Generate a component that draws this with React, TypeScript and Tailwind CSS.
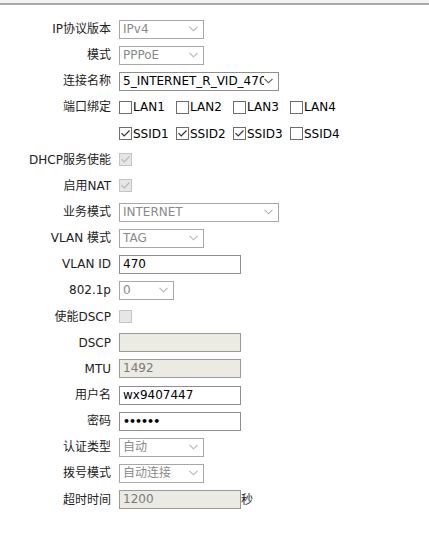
import React from 'react';

const Chevron = ({ dark }: { dark?: boolean }) => (
  <svg width="9" height="6" viewBox="0 0 9 6" className="shrink-0">
    <path d="M0.5 0.8 L4.5 4.8 L8.5 0.8" fill="none" stroke={dark ? '#555' : '#b4b4b4'} strokeWidth="1.1" />
  </svg>
);

const Select = ({ value, width, enabled }: { value: string; width: string; enabled?: boolean }) => (
  <div className={`flex items-center h-[19px] border ${enabled ? 'border-[#8e8e8e] bg-white text-black' : 'border-[#a8a8a8] bg-white text-[#8a8a8a]'} pl-[3px] pr-[5px] ${width}`}>
    <span className="flex-1 overflow-hidden whitespace-nowrap leading-[17px]">{value}</span>
    <Chevron dark={enabled} />
  </div>
);

const Input = ({ value, disabled, children }: { value?: string; disabled?: boolean; children?: React.ReactNode }) => (
  <div className={`flex items-center h-[19px] w-[122px] border ${disabled ? 'border-[#9a9a9a] bg-[#ebebe4] text-[#7a7a7a]' : 'border-[#8e8e8e] bg-white text-black'} px-[3px] leading-[17px]`}>
    {children ?? value}
  </div>
);

const Check = ({ checked, disabled }: { checked?: boolean; disabled?: boolean }) => (
  <span className={`inline-flex items-center justify-center w-[13px] h-[13px] shrink-0 border ${disabled ? 'border-[#c4c4c4] bg-[#e6e6e6]' : 'border-[#6e6e6e] bg-white'}`}>
    {checked && (
      <svg width="11" height="9" viewBox="0 0 11 9">
        <path d="M1.5 4.2 L4.2 7 L9.5 1.5" fill="none" stroke={disabled ? '#b8b8b8' : '#333'} strokeWidth="1.2" />
      </svg>
    )}
  </span>
);

const Box = ({ label, checked }: { label: string; checked?: boolean }) => (
  <span className="flex items-center w-[57px]">
    <Check checked={checked} />
    <span className="ml-[1px] leading-none">{label}</span>
  </span>
);

const Row = ({ label, children }: { label: string; children: React.ReactNode }) => (
  <div className="flex items-center h-[26.15px]">
    <div className="w-[112px] text-right pr-[1px] text-[#222] whitespace-nowrap">{label}</div>
    <div className="ml-[7px] flex items-center">{children}</div>
  </div>
);

export default function App() {
  return (
    <div className="w-[429px] h-[539px] bg-white text-[12px] font-['DejaVu_Sans','Noto_Sans_CJK_SC',sans-serif] overflow-hidden">
      <div className="h-[3px] bg-[#f2f2f2]" />
      <div className="h-[2px] bg-[#a9a9a9]" />
      <div className="pt-[11px]">
        <Row label="IP协议版本"><Select value="IPv4" width="w-[85px]" /></Row>
        <Row label="模式"><Select value="PPPoE" width="w-[85px]" /></Row>
        <Row label="连接名称"><Select value="5_INTERNET_R_VID_470" width="w-[160px]" enabled /></Row>
        <Row label="端口绑定">
          <Box label="LAN1" />
          <Box label="LAN2" />
          <Box label="LAN3" />
          <Box label="LAN4" />
        </Row>
        <Row label="">
          <Box label="SSID1" checked />
          <Box label="SSID2" checked />
          <Box label="SSID3" checked />
          <Box label="SSID4" />
        </Row>
        <Row label="DHCP服务使能"><Check checked disabled /></Row>
        <Row label="启用NAT"><Check checked disabled /></Row>
        <Row label="业务模式"><Select value="INTERNET" width="w-[160px]" /></Row>
        <Row label="VLAN 模式"><Select value="TAG" width="w-[85px]" /></Row>
        <Row label="VLAN ID"><Input value="470" /></Row>
        <Row label="802.1p"><Select value="0" width="w-[55px]" /></Row>
        <Row label="使能DSCP"><Check disabled /></Row>
        <Row label="DSCP"><Input value="" disabled /></Row>
        <Row label="MTU"><Input value="1492" disabled /></Row>
        <Row label="用户名"><Input value="wx9407447" /></Row>
        <Row label="密码">
          <Input>
            <span className="text-[11px] font-bold tracking-[-1px]">••••••</span>
          </Input>
        </Row>
        <Row label="认证类型"><Select value="自动" width="w-[85px]" /></Row>
        <Row label="拨号模式"><Select value="自动连接" width="w-[85px]" /></Row>
        <Row label="超时时间">
          <Input value="1200" disabled />
          <span className="text-[#222]">秒</span>
        </Row>
      </div>
    </div>
  );
}
